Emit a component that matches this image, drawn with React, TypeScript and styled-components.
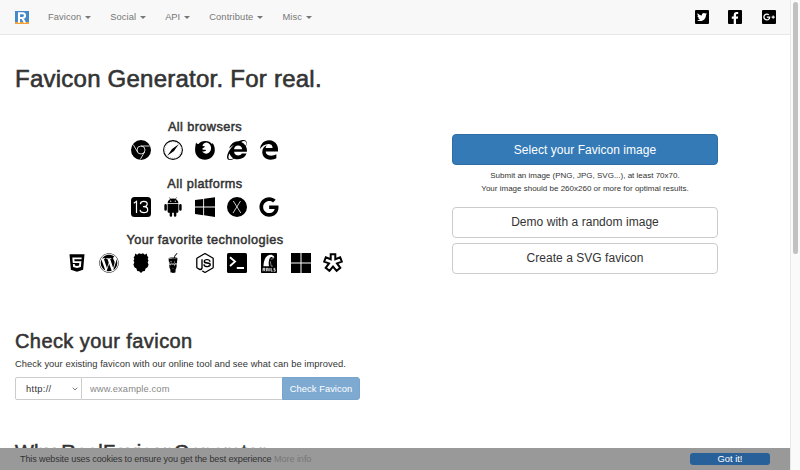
import React from "react";
import styled, { createGlobalStyle } from "styled-components";
import {
  FaEdgeLegacy, FaInternetExplorer, FaGoogle, FaHtml5,
  FaWordpress, FaGulp, FaTwitter, FaFacebookF, FaGooglePlusG,
} from "react-icons/fa";
import { SiNodedotjs } from "react-icons/si";

const GlobalStyle = createGlobalStyle`
  * { box-sizing: border-box; }
  html, body { margin: 0; height: 470px; overflow: hidden; background: #fff; }
  body { font-family: "Liberation Sans", Arial, sans-serif; font-size: 9.33px; color: #333; }
  button, input { font-family: inherit; }
`;

const Window = styled.div`
  display: flex;
  width: 800px;
  height: 470px;
  position: relative;
  overflow: hidden;
`;
const Page = styled.div`
  width: 790px;
  height: 470px;
  overflow: hidden;
`;
const ScrollTrack = styled.div`
  width: 10px;
  background: #fafafa;
  border-left: 1px solid #e8e8e8;
  padding: 2px 2px 0 2px;
`;
const ScrollThumb = styled.div`
  width: 5px;
  height: 252px;
  border-radius: 3px;
  background: #c1c1c1;
`;

const Navbar = styled.header`
  display: flex;
  align-items: center;
  height: 35px;
  padding: 0 15px;
  background: #f8f8f8;
  border-bottom: 1px solid #e7e7e7;
`;
const Brand = styled.a`
  display: flex;
  margin-right: 19px;
`;
const Menu = styled.nav`
  display: flex;
  flex: 1;
  gap: 19px;
`;
const MenuItem = styled.a<{ $spacing: number }>`
  display: flex;
  align-items: center;
  gap: 4px;
  color: #777;
  font-size: 9.33px;
  line-height: 14px;
  letter-spacing: ${(p) => p.$spacing}px;
`;
const Caret = styled.span`
  border: 3px solid transparent;
  border-top-color: #777;
  border-bottom: 0;
  margin-top: 1px;
`;
const SocialLinks = styled.div`
  display: flex;
  gap: 19.5px;
  margin-right: -0.5px;
`;
const SocialTile = styled.a<{ $kind: "twitter" | "facebook" | "google" }>`
  display: flex;
  width: 14px;
  height: 14px;
  border-radius: 1px;
  background: #000;
  color: #fff;
  align-items: ${(p) => (p.$kind === "facebook" ? "flex-end" : "center")};
  justify-content: ${(p) => (p.$kind === "facebook" ? "flex-end" : "center")};
  padding-right: ${(p) => (p.$kind === "facebook" ? 1 : 0)}px;
  overflow: hidden;
  font-size: ${(p) => ({ twitter: 10, facebook: 12, google: 12 })[p.$kind]}px;
`;

const Title = styled.h1`
  margin: 28px 0 0 15px;
  font-size: 24px;
  line-height: 31px;
  font-weight: 400;
  letter-spacing: 0.24px;
  -webkit-text-stroke: 0.6px #333;
`;
const Hero = styled.section`
  display: flex;
  padding: 25px 0 0 15px;
  height: 210px;
`;
const Supported = styled.div`
  width: 380px;
  display: flex;
  flex-direction: column;
  align-items: center;
`;
const GroupTitle = styled.h4<{ $spacing: number }>`
  margin: 0;
  font-size: 12.7px;
  line-height: 16px;
  font-weight: 400;
  letter-spacing: ${(p) => p.$spacing}px;
  -webkit-text-stroke: 0.5px #333;
`;
const IconRow = styled.div`
  display: flex;
  gap: 12px;
  margin: 5px 0 15.5px;
  height: 20px;
  color: #000;
  font-size: 20px;
  svg { display: block; width: 20px; height: 20px; }
`;
const Actions = styled.div`
  width: 266px;
  margin: 15px 0 0 57px;
  display: flex;
  flex-direction: column;
`;
const ActionButton = styled.button<{ $primary?: boolean }>`
  height: 31px;
  padding: 0;
  margin-bottom: ${(p) => (p.$primary ? 4 : 5)}px;
  border: 1px solid ${(p) => (p.$primary ? "#2e6da4" : "#ccc")};
  border-radius: 4px;
  background: ${(p) => (p.$primary ? "#337ab7" : "#fff")};
  color: ${(p) => (p.$primary ? "#fff" : "#333")};
  font-size: 12px;
  line-height: ${(p) => (p.$primary ? 28 : 29)}px;
  letter-spacing: 0.04px;
`;
const Hint = styled.p`
  margin: 0 0 11.4px;
  text-align: center;
  font-size: 8px;
  line-height: 13.3px;
`;

const CheckSection = styled.section`
  padding: 24px 15px 0;
`;
const SectionTitle = styled.h2<{ $spacing: number }>`
  margin: 0;
  font-size: 20px;
  line-height: 26px;
  font-weight: 400;
  letter-spacing: ${(p) => p.$spacing}px;
  white-space: nowrap;
  -webkit-text-stroke: 0.55px #333;
`;
const Lead = styled.p`
  margin: 3px 0 6px;
  font-size: 9.33px;
  line-height: 14px;
  letter-spacing: 0.06px;
`;
const CheckForm = styled.form`
  display: flex;
  width: 345px;
  height: 23px;
`;
const Protocol = styled.div`
  display: flex;
  align-items: center;
  justify-content: space-between;
  width: 67px;
  padding: 0 3px 0 10px;
  border: 1px solid #ccc;
  border-radius: 2px 0 0 2px;
  letter-spacing: 0.3px;
`;
const UrlInput = styled.input`
  width: 200px;
  padding: 0 8px;
  border: 1px solid #ccc;
  border-left: 0;
  border-right: 0;
  border-radius: 0;
  outline: 0;
  font-size: 9.33px;
  letter-spacing: 0.12px;
  &::placeholder { color: #888; }
`;
const CheckButton = styled.button`
  flex: 1;
  padding: 0;
  border: 1px solid #78a5cd;
  border-radius: 0 3px 3px 0;
  background: #7eaad2;
  color: #fff;
  font-size: 9.33px;
  letter-spacing: 0.06px;
  white-space: nowrap;
`;
const WhySection = styled.section`
  padding: 39px 15px 0;
`;

const CookieBar = styled.div`
  position: absolute;
  left: 0;
  bottom: 0;
  width: 790px;
  height: 22px;
  padding: 0 20px;
  display: flex;
  align-items: center;
  justify-content: space-between;
  background: #999;
  color: #333;
  font-size: 9.1px;
  letter-spacing: -0.14px;
`;
const MoreLink = styled.a`
  color: #777;
  letter-spacing: -0.05px;
`;
const AcceptButton = styled.button`
  width: 80px;
  height: 12px;
  padding: 0;
  border: 0;
  border-radius: 3px;
  background: #28609a;
  color: #fff;
  font-size: 9.33px;
  line-height: 12px;
`;

const Logo = () => (
  <svg width="14" height="13" viewBox="0 0 14 13">
    <rect width="14" height="13" fill="#4488c8" />
    <rect y="11" width="14" height="2" fill="#f0a13c" />
    <path d="M4 11.7V2.2H7.6A2.3 2.3 0 0 1 7.6 7H4M7.2 7L10 11.7" fill="none" stroke="#fff" strokeWidth="2.1" />
  </svg>
);
const Chrome = () => (
  <svg viewBox="0 0 20 20">
    <circle cx="10" cy="10" r="10" />
    <g fill="none" stroke="#fff" strokeWidth=".8">
      <circle cx="10" cy="10" r="4" />
      <path d="M10 6H18.8M6.5 12L2.3 4.7M13.5 12L9.2 19.6" />
    </g>
  </svg>
);
const Safari = () => (
  <svg viewBox="0 0 20 20">
    <circle cx="10" cy="10" r="9.4" fill="none" stroke="#000" strokeWidth="1.1" />
    <circle cx="10" cy="10" r="8" fill="none" stroke="#000" strokeWidth=".7" strokeDasharray=".5 1.6" opacity=".5" />
    <path d="M15.7 4.3L11 11L4.3 15.7L9 9Z" />
  </svg>
);
const Firefox = () => (
  <svg viewBox="0 0 20 20">
    <path d="M1.1 2.5C1.8 3.6 2.5 4 3.5 4.1C5 2.2 7.3 1 10 1C14 1 16.3 2.8 17.2 4.3L17.4 2.7C19.1 5 20 7.5 19.8 10.8C19.4 16 15.2 19.7 10 19.7C4.4 19.7.1 15.5.1 10.2C.1 7.6.5 4.6 1.1 2.5Z" />
    <path d="M9.3 3.2C11.5 1.7 14 3 15.2 5C16.6 7.4 16.3 10.3 14.6 12.1C13 13.8 10.7 14 9 13.1C8.1 12.7 7.4 12 7.1 11.3C8.6 11.9 9.8 11.4 11.2 10.6C11 9.8 9.8 10 8.3 9.8C7.2 9.5 7.2 8.8 7.6 8.3L9.8 7L9.6 6.3L7.6 5.9C7.5 4.8 8.2 3.9 9.3 3.2Z" fill="#fff" />
  </svg>
);
const Ios = () => (
  <svg viewBox="0 0 20 20">
    <rect width="20" height="20" rx="3.5" />
    <g fill="none" stroke="#fff" strokeWidth="1.2">
      <path d="M2.8 6.2L5.5 4.3V16" />
      <path d="M9.4 7.1C9.5 5.2 10.8 4.4 12.8 4.4C15 4.4 16.2 5.4 16.2 7C16.2 8.7 15 9.6 12.9 9.7H12M12.9 9.7C15.3 9.8 16.7 10.9 16.7 12.7C16.7 14.7 15.2 15.7 12.9 15.7C10.7 15.7 9.3 14.7 9.1 12.9" />
    </g>
  </svg>
);
const Android = () => (
  <svg viewBox="0 0 20 20">
    <path d="M4.6 6.2A5.4 4.8 0 0 1 15.4 6.2ZM4.6 6.9H15.4V14.6A1.2 1.2 0 0 1 14.2 15.8H5.8A1.2 1.2 0 0 1 4.6 14.6Z" />
    <path d="M6.7 .7L8 2.8M13.3 .7L12 2.8" stroke="#000" strokeWidth=".6" strokeLinecap="round" />
    <path d="M2.6 8.3V12.5M17.4 8.3V12.5M7.9 14.5V18.6M12.1 14.5V18.6" stroke="#000" strokeWidth="2.5" strokeLinecap="round" />
    <circle cx="7.7" cy="4.2" r=".6" fill="#fff" />
    <circle cx="12.3" cy="4.2" r=".6" fill="#fff" />
  </svg>
);
const Windows = () => (
  <svg viewBox="0 0 20 20">
    <path d="M0 3.1L8.2 1.9V9.6H0ZM9.1 1.8L20 .2V9.6H9.1ZM0 10.5H8.2V18.2L0 17.1ZM9.1 10.5H20V19.9L9.1 18.3Z" />
  </svg>
);
const MacOs = () => (
  <svg viewBox="0 0 20 20">
    <circle cx="10" cy="10" r="10" />
    <path d="M6.3 4L13.8 16M13.5 4L6 16" stroke="#fff" strokeWidth=".8" />
  </svg>
);
const Grunt = () => (
  <svg viewBox="0 0 20 20">
    <path d="M4.2 .4L6.2 1.8L8 .2L10 1L12 .2L13.8 1.8L15.8 .4L16.2 3L17.4 4.2L16.7 6L17.5 7.4L16.7 9.4L17.6 11.5L16.6 14.2L14.6 15.5L13.8 18L11.8 18.3L10 19.9L8.2 18.3L6.2 18L5.4 15.5L3.4 14.2L2.4 11.5L3.3 9.4L2.5 7.4L3.3 6L2.6 4.2L3.8 3Z" />
  </svg>
);
const Terminal = () => (
  <svg viewBox="0 0 20 20">
    <rect width="20" height="20" rx="1.5" />
    <path d="M3 4.2L8 8.6L3 13M9.8 15H17" fill="none" stroke="#fff" strokeWidth="1.9" />
  </svg>
);
const Rails = () => (
  <svg viewBox="0 0 20 20">
    <rect x="2" width="16" height="20" rx=".8" />
    <path d="M4.5 13.3C4.7 8 6.2 3 10.3 2C12.9 1.4 14.5 2.7 15.4 4.3L14.1 5C13 3.7 11.7 3.8 10.9 5C9.6 7 9.4 10 10 13.3Z" fill="#fff" />
    <path d="M11.8 6.3L14.5 5.6M11.3 8.2L12.2 13.2H13.8" fill="none" stroke="#fff" strokeWidth=".5" />
    <path d="M4 18.3V15.3H6V16.7H4.5L6.2 18.3M7.4 18.3V15.3H9.2V18.3M7.4 17H9.2M10.8 15V18.3M12.2 15V18.2H13.7M16.2 15.4H14.9V16.7H16.2V18.2H14.6" fill="none" stroke="#fff" strokeWidth=".8" />
  </svg>
);
const FourSquares = () => (
  <svg viewBox="0 0 20 20">
    <path d="M0 0H9.5V9.5H0ZM10.5 0H20V9.5H10.5ZM0 10.5H9.5V20H0ZM10.5 10.5H20V20H10.5Z" />
  </svg>
);
const Asterisk = () => (
  <svg viewBox="0 0 20 20">
    <path
      d="M7.7 1.3H12.3V6.3L17.2 4.4L18.8 8.6L14 10.4L17.3 14.8L13.6 17.8L10 13.6L6.4 17.8L2.7 14.8L6 10.4L1.2 8.6L2.8 4.4L7.7 6.3Z"
      fill="none" stroke="#000" strokeWidth="2"
    />
  </svg>
);

const menu = [
  { label: "Favicon", spacing: 0.08 },
  { label: "Social", spacing: 0.08 },
  { label: "API", spacing: 0 },
  { label: "Contribute", spacing: 0.12 },
  { label: "Misc", spacing: 0.1 },
];

const groups: { title: string; spacing: number; icons: React.ComponentType[] }[] = [
  { title: "All browsers", spacing: 0.42, icons: [Chrome, Safari, Firefox, FaInternetExplorer, FaEdgeLegacy] },
  { title: "All platforms", spacing: 0.42, icons: [Ios, Android, Windows, MacOs, FaGoogle] },
  {
    title: "Your favorite technologies",
    spacing: 0.44,
    icons: [FaHtml5, FaWordpress, Grunt, FaGulp, SiNodedotjs, Terminal, Rails, FourSquares, Asterisk],
  },
];

export default function App() {
  return (
    <Window>
      <GlobalStyle />
      <Page>
        <Navbar>
          <Brand><Logo /></Brand>
          <Menu>
            {menu.map((m) => (
              <MenuItem key={m.label} $spacing={m.spacing}>{m.label}<Caret /></MenuItem>
            ))}
          </Menu>
          <SocialLinks>
            <SocialTile $kind="twitter"><FaTwitter /></SocialTile>
            <SocialTile $kind="facebook"><FaFacebookF /></SocialTile>
            <SocialTile $kind="google"><FaGooglePlusG /></SocialTile>
          </SocialLinks>
        </Navbar>
        <Title>Favicon Generator. For real.</Title>
        <Hero>
          <Supported>
            {groups.map((g) => (
              <React.Fragment key={g.title}>
                <GroupTitle $spacing={g.spacing}>{g.title}</GroupTitle>
                <IconRow>{g.icons.map((Icon, i) => <Icon key={i} />)}</IconRow>
              </React.Fragment>
            ))}
          </Supported>
          <Actions>
            <ActionButton $primary>Select your Favicon image</ActionButton>
            <Hint>
              Submit an image (PNG, JPG, SVG...), at least 70x70.<br />
              Your image should be 260x260 or more for optimal results.
            </Hint>
            <ActionButton>Demo with a random image</ActionButton>
            <ActionButton>Create a SVG favicon</ActionButton>
          </Actions>
        </Hero>
        <CheckSection>
          <SectionTitle $spacing={0.42}>Check your favicon</SectionTitle>
          <Lead>Check your existing favicon with our online tool and see what can be improved.</Lead>
          <CheckForm>
            <Protocol>
              http://
              <svg width="6" height="4" viewBox="0 0 6 4"><path d="M.7 .7L3 3L5.3 .7" fill="none" stroke="#555" strokeWidth=".8" /></svg>
            </Protocol>
            <UrlInput placeholder="www.example.com" />
            <CheckButton type="button">Check Favicon</CheckButton>
          </CheckForm>
        </CheckSection>
        <WhySection>
          <SectionTitle $spacing={0.15}>Why RealFaviconGenerator</SectionTitle>
        </WhySection>
      </Page>
      <ScrollTrack><ScrollThumb /></ScrollTrack>
      <CookieBar>
        <span>This website uses cookies to ensure you get the best experience <MoreLink>More info</MoreLink></span>
        <AcceptButton>Got it!</AcceptButton>
      </CookieBar>
    </Window>
  );
}
